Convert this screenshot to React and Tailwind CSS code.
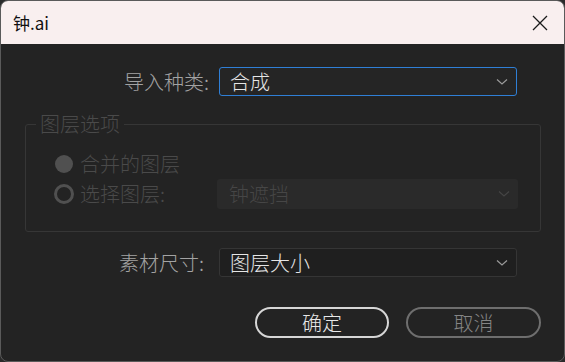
import React from "react";

const font = { fontFamily: '"Noto Sans CJK SC", "Noto Sans", sans-serif' };

function Chevron({ color }) {
  return (
    <svg width="12" height="8" viewBox="0 0 12 8" fill="none">
      <path d="M1 1.5 L6 6 L11 1.5" stroke={color} strokeWidth="1.2" />
    </svg>
  );
}

export default function App() {
  return (
    <div className="w-[565px] h-[362px] bg-[#2a2a2a] overflow-hidden font-light" style={font}>
      <div className="w-[565px] h-[362px] rounded-[8px] border border-[#5a5a5a] bg-[#232323] overflow-hidden flex flex-col">
        <div className="h-[43px] bg-[#f9efef] flex items-center justify-between pl-[12px] pr-[16px] shrink-0">
          <span className="text-[17px] text-[#111] leading-none font-normal">钟.ai</span>
          <svg width="16" height="16" viewBox="0 0 16 16">
            <path d="M1 1 L15 15 M15 1 L1 15" stroke="#1a1a1a" strokeWidth="1.3" />
          </svg>
        </div>
        <div className="flex flex-col pt-[23px] pl-[23px] pr-[23px]">
          <div className="flex items-center h-[29px]">
            <div className="w-[195px] text-right text-[20px] text-[#a3a3a3] pr-[10px] leading-none">导入种类:</div>
            <div className="w-[298px] h-[29px] rounded-[3px] border border-[#2f7fd6] bg-[#252525] flex items-center justify-between pl-[10px] pr-[8px]">
              <span className="text-[20px] text-[#e6e6e6] leading-none">合成</span>
              <Chevron color="#9a9a9a" />
            </div>
          </div>
          <div className="relative mt-[28px] h-[108px] rounded-[3px] border border-[#363636] ml-[1px]">
            <span className="absolute -top-[14px] left-[10px] bg-[#232323] px-[4px] text-[20px] text-[#4a4a4a] leading-[26px]">图层选项</span>
            <div className="flex flex-col pt-[26px] pl-[28px]">
              <div className="flex items-center h-[26px]">
                <div className="w-[18px] h-[18px] ml-[1px] rounded-full bg-[#505050]" />
                <span className="ml-[7px] text-[20px] text-[#4a4a4a] leading-none">合并的图层</span>
              </div>
              <div className="flex items-center h-[30px] mt-[2px]">
                <div className="w-[20px] h-[20px] rounded-full border-[3px] border-[#505050]" />
                <span className="ml-[6px] w-[137px] text-[20px] text-[#4a4a4a] leading-none">选择图层:</span>
                <div className="w-[301px] h-[30px] rounded-[3px] bg-[#2a2a2a] flex items-center justify-between pl-[12px] pr-[8px]">
                  <span className="text-[20px] text-[#464646] leading-none">钟遮挡</span>
                  <Chevron color="#444" />
                </div>
              </div>
            </div>
          </div>
          <div className="flex items-center h-[29px] mt-[16px]">
            <div className="w-[195px] text-right text-[20px] text-[#a3a3a3] pr-[15px] leading-none">素材尺寸:</div>
            <div className="w-[298px] h-[29px] rounded-[3px] border border-[#353535] bg-[#1f1f1f] flex items-center justify-between pl-[10px] pr-[8px]">
              <span className="text-[20px] text-[#e6e6e6] leading-none">图层大小</span>
              <Chevron color="#9a9a9a" />
            </div>
          </div>
          <div className="flex justify-end gap-[17px] mt-[30px]">
            <div className="w-[134px] h-[31px] rounded-full border-2 border-[#d6d6d6] flex items-center justify-center text-[20px] text-[#e8e8e8] leading-none">确定</div>
            <div className="w-[135px] h-[31px] rounded-full border-2 border-[#6e6e6e] flex items-center justify-center text-[20px] text-[#858585] leading-none">取消</div>
          </div>
        </div>
      </div>
    </div>
  );
}
